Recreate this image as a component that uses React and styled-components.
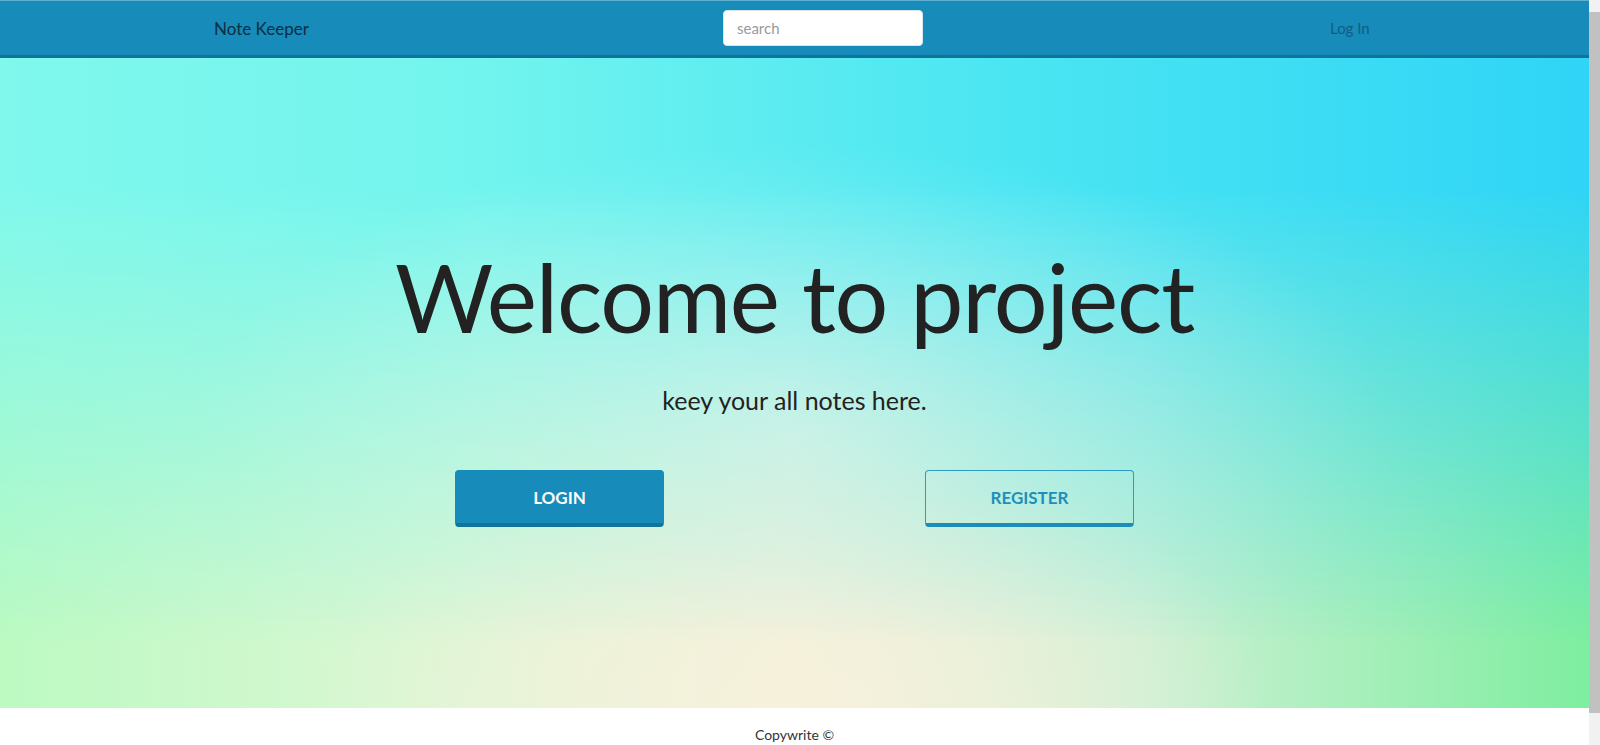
import React from "react";
import styled, { createGlobalStyle } from "styled-components";

const GlobalStyle = createGlobalStyle`
  html, body {
    margin: 0;
    padding: 0;
  }
  body {
    font-family: "Lato", "Open Sans", sans-serif;
    color: #222;
    background:
      linear-gradient(to bottom, #f1f1f1 0, #f1f1f1 12px, #c1c1c1 12px, #c1c1c1 713px, #f1f1f1 713px) right top / 11px 745px no-repeat,
      #fff;
  }
  * { box-sizing: border-box; }
`;

const Page = styled.div`
  width: calc(100% - 11px);
  display: flex;
  flex-direction: column;
`;

const NavBar = styled.nav`
  height: 58px;
  display: flex;
  align-items: center;
  padding-left: 214px;
  background: #178bba;
  border-top: 1px solid #5fb0d0;
  border-bottom: 3px solid #127398;
`;

const Brand = styled.a`
  width: 509px;
  font-size: 17px;
  color: #0b2f45;
  text-decoration: none;
`;

const SearchInput = styled.input`
  width: 200px;
  height: 36px;
  border: 1px solid #d8e6ec;
  border-radius: 4px;
  padding: 0 13px;
  font-family: inherit;
  font-size: 15px;
  color: #333;
  background: #fff;
  outline: none;
  &::placeholder { color: #9a9a9a; }
`;

const NavLink = styled.a`
  margin-left: 407px;
  font-size: 15px;
  color: #105e85;
  text-decoration: none;
`;

const Hero = styled.main`
  position: relative;
  height: 650px;
  overflow: hidden;
  display: flex;
  flex-direction: column;
  align-items: center;
  padding-top: 186px;
  background:
    radial-gradient(ellipse 30% 40% at 50% 100%, rgba(246, 241, 220, 0.9) 0%, rgba(246, 241, 220, 0) 100%),
    linear-gradient(to right, #bcfac2 0%, #d9f7d3 25%, #f4f1db 50%, #cdf0d4 72%, #7eeea0 100%);

  &::before {
    content: "";
    position: absolute;
    inset: 0;
    background:
      radial-gradient(ellipse 38% 45% at 50% 58%, rgba(225, 250, 246, 0.5) 0%, rgba(225, 250, 246, 0) 100%),
      linear-gradient(to right, #80f8ec 0%, #72f4ee 30%, #4ce6f2 62%, #2fd4f6 100%);
    -webkit-mask-image: linear-gradient(to bottom, #000 0%, #000 20%, rgba(0,0,0,0.5) 56%, rgba(0,0,0,0) 90%);
    mask-image: linear-gradient(to bottom, #000 0%, #000 20%, rgba(0,0,0,0.5) 56%, rgba(0,0,0,0) 90%);
  }
`;

const Content = styled.div`
  position: relative;
  z-index: 1;
  display: flex;
  flex-direction: column;
  align-items: center;
`;

const Title = styled.h1`
  margin: 0;
  font-size: 95px;
  line-height: 1.1;
  font-weight: 400;
  letter-spacing: -1.2px;
  color: #222;
`;

const Subtitle = styled.p`
  margin: 33px 0 0;
  font-size: 25px;
  line-height: 1.5;
  color: #222;
`;

const ButtonRow = styled.div`
  margin-top: 51px;
  width: 940px;
  display: grid;
  grid-template-columns: 1fr 1fr;
  justify-items: center;
`;

const Button = styled.button`
  width: 209px;
  height: 57px;
  border-radius: 4px;
  border: 1px solid ${(p) => (p.$outline ? "#2a9cc6" : "#178bba")};
  border-bottom: 4px solid ${(p) => (p.$outline ? "#1c8dbb" : "#12749b")};
  background: ${(p) => (p.$outline ? "transparent" : "#178bba")};
  color: ${(p) => (p.$outline ? "#1e8fbc" : "#fff")};
  font-family: inherit;
  font-weight: 700;
  font-size: 17px;
  text-transform: uppercase;
  cursor: pointer;
`;

const Footer = styled.footer`
  padding: 17px 0;
  line-height: 20px;
  font-size: 14px;
  text-align: center;
  color: #333;
  background: #fff;
`;

export default function App() {
  return (
    <Page>
      <GlobalStyle />
      <NavBar>
        <Brand href="#">Note Keeper</Brand>
        <SearchInput type="text" placeholder="search" />
        <NavLink href="#">Log In</NavLink>
      </NavBar>
      <Hero>
        <Content>
          <Title>Welcome to project</Title>
          <Subtitle>keey your all notes here.</Subtitle>
          <ButtonRow>
            <Button>Login</Button>
            <Button $outline>Register</Button>
          </ButtonRow>
        </Content>
      </Hero>
      <Footer>Copywrite ©</Footer>
    </Page>
  );
}
